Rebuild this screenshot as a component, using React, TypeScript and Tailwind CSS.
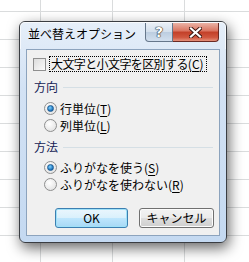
import React from "react";

const font = { fontFamily: '"Noto Sans CJK JP", "Noto Sans", sans-serif' };

const Radio = ({ checked }: { checked?: boolean }) => (
  <span className="w-[13px] h-[13px] rounded-full border border-[#8e8f8f] bg-[radial-gradient(circle_at_40%_35%,#ffffff,#dcdcdc)] flex items-center justify-center shrink-0">
    {checked && (
      <span className="w-[7px] h-[7px] rounded-full bg-[radial-gradient(circle_at_40%_35%,#7fd3ff,#1a6fb8_70%,#0d4c8a)] border border-[#1f5d94]" />
    )}
  </span>
);

const Option = ({ checked, label, k }: { checked?: boolean; label: string; k: string }) => (
  <div className="h-[17px] flex items-center gap-[3px] pl-[17px]">
    <Radio checked={checked} />
    <span className="text-[12px] leading-none text-black">
      {label}(<span className="underline underline-offset-2">{k}</span>)
    </span>
  </div>
);

const Header = ({ children }: { children: string }) => (
  <div className="h-[16px] flex items-center gap-[5px] pl-[7px] pr-[6px]">
    <span className="text-[12px] leading-none text-[#151c55]">{children}</span>
    <span className="flex-1 h-px bg-[#d5dfe5]" />
  </div>
);

export default function App() {
  return (
    <div className="relative w-[249px] h-[262px] bg-white overflow-hidden" style={font}>
      {/* ワークシートの罫線 */}
      <div className="flex flex-col">
        {[12, 28, 28, 28, 28, 28, 28, 28, 28, 28].map((h, r) => (
          <div key={r} className="flex border-b border-[#dadcdd]" style={{ height: h }}>
            <div className="w-[41px] border-r border-[#dadcdd]" />
            <div className="w-[72px] border-r border-[#dadcdd]" />
            <div className="w-[72px] border-r border-[#dadcdd]" />
            <div className="flex-1" />
          </div>
        ))}
      </div>

      {/* ダイアログ */}
      <div className="absolute left-[19px] top-[21px] w-[208px] h-[222px] rounded-[6px] border border-[#3a3d42] bg-[linear-gradient(to_bottom,#e6eff9,#d3e2f4_30%,#c4d9f1)] shadow-[2px_5px_14px_rgba(0,0,0,0.6)] flex flex-col">
        <div className="h-[27px] flex items-start shrink-0 rounded-t-[5px] border-t border-l border-r border-white/70">
          <span className="pl-[7px] pt-[5px] text-[12px] leading-none text-black">並べ替えオプション</span>
          <div className="ml-auto mr-[6px] flex">
            <div className="w-[28px] h-[19px] border border-[#66778b] border-t-0 rounded-bl-[4px] bg-[linear-gradient(to_bottom,#e9eff6,#d3dfec_50%,#bccde0_51%,#d2dfee)] flex items-center justify-center">
              <span className="text-white font-bold text-[14px] leading-none [text-shadow:0_0_1px_#222,0_0_1px_#222,0_0_1px_#222]" style={{ fontFamily: '"DejaVu Sans", sans-serif' }}>?</span>
            </div>
            <div className="w-[46px] h-[19px] border border-[#6b2a24] border-t-0 border-l-0 rounded-br-[4px] bg-[linear-gradient(to_bottom,#eab3a6,#d9735f_45%,#c23f28_50%,#d0573f_80%,#e5917b)] flex items-center justify-center">
              <svg width="13" height="11" viewBox="0 0 13 11">
                <path d="M2 1.5 L11 9.5 M11 1.5 L2 9.5" stroke="#3b1510" strokeWidth="4" strokeLinecap="square" />
                <path d="M2 1.5 L11 9.5 M11 1.5 L2 9.5" stroke="#ffffff" strokeWidth="2.2" strokeLinecap="square" />
              </svg>
            </div>
          </div>
        </div>

        <div className="mx-[6px] h-[187px] border border-[#8ca3bd] bg-[#f0f0f0] flex flex-col pt-[6px]">
          <div className="h-[16px] flex items-center gap-[3px] pl-[6px]">
            <span className="w-[13px] h-[13px] border border-[#8f8f8f] bg-[linear-gradient(135deg,#dcdcdc,#fbfbfb)] shrink-0" />
            <span className="flex items-center text-[12px] leading-none text-black border border-dotted border-black pl-px pr-[2px] py-[1px]">
              <span className="tracking-[-0.6px]">大文字と小文字を区別する</span>
              <span>(<span className="underline underline-offset-2">C</span>)</span>
            </span>
          </div>
          <div className="mt-[7px]">
            <Header>方向</Header>
          </div>
          <div className="mt-[5px]">
            <Option checked label="行単位" k="T" />
            <Option label="列単位" k="L" />
          </div>
          <div className="mt-[5px]">
            <Header>方法</Header>
          </div>
          <div className="mt-[4px]">
            <Option checked label="ふりがなを使う" k="S" />
            <Option label="ふりがなを使わない" k="R" />
          </div>
          <div className="mt-[15px] flex gap-[11px] pl-[28px]">
            <button className="w-[73px] h-[20px] rounded-[3px] border border-[#3c7fb1] shadow-[inset_0_0_0_1px_#9fe1f8] bg-[linear-gradient(to_bottom,#eaf6fd,#d9f0fc_50%,#bee6fd_51%,#a7d9f5)] text-[12px] leading-none text-black">
              OK
            </button>
            <button className="w-[75px] h-[20px] rounded-[3px] border border-[#707070] shadow-[inset_0_0_0_1px_#fcfcfc] bg-[linear-gradient(to_bottom,#f2f2f2,#ebebeb_50%,#dddddd_51%,#cfcfcf)] text-[12px] leading-none text-black">
              キャンセル
            </button>
          </div>
        </div>
      </div>
    </div>
  );
}
